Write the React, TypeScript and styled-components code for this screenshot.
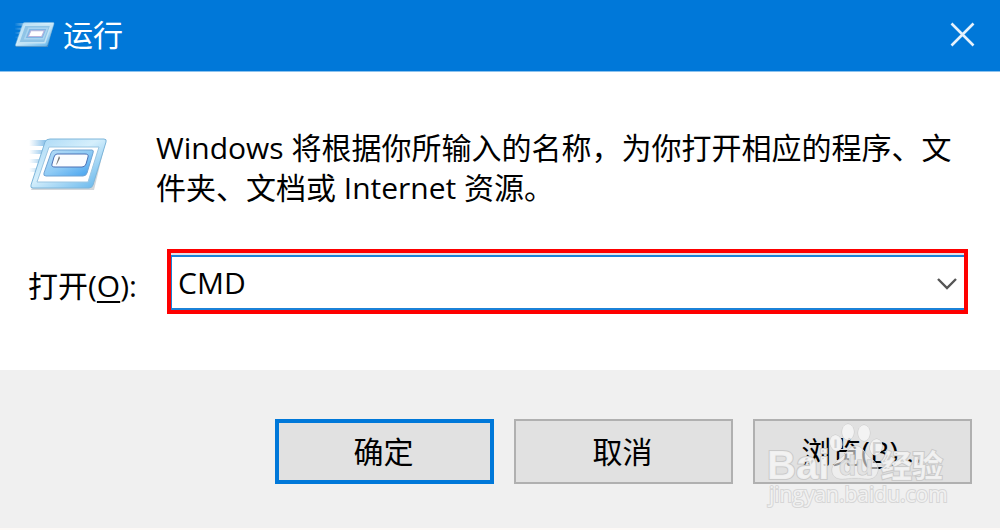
import React from "react";
import styled, { createGlobalStyle } from "styled-components";

const Global = createGlobalStyle`
  * { box-sizing: border-box; }
  body { margin: 0; background: #fdf9f6; }
  body, button, input { font-family: "Open Sans", "Noto Sans CJK SC", sans-serif; font-size: 30px; color: #000; }
`;

const Dialog = styled.main`
  position: relative;
  line-height: 40px;
`;

const TitleBar = styled.header`
  display: flex;
  align-items: center;
  height: 72px;
  padding: 0 24px 2px 14px;
  gap: 8px;
  background: #0078d9;
  border-bottom: 1px solid #8cc2ee;
  color: #fff;
`;

const Title = styled.h1`
  flex: 1;
  margin: 0;
  font-size: 30px;
  font-weight: 400;
`;

const IconButton = styled.button`
  display: flex;
  padding: 0;
  border: 0;
  background: none;
`;

const Body = styled.section`
  display: flex;
  flex-direction: column;
  gap: 41px;
  padding: 56px 32px 56px 28px;
  background: #fff;
`;

const Message = styled.div`
  display: flex;
  gap: 48px;
`;

const MessageIcon = styled.div`
  flex: none;
  padding-top: 8px;
`;

const MessageText = styled.p`
  flex: 1;
  margin: 0;
`;

const Field = styled.div`
  display: flex;
  align-items: center;
`;

const Label = styled.label`
  flex: none;
  width: 139px;
  padding-top: 8px;
`;

const Key = styled.span`
  text-decoration: underline;
  text-decoration-thickness: 2px;
  text-underline-offset: 4px;
`;

const Highlight = styled.div`
  flex: 1;
  padding-top: 2px;
  border: 4px solid #fe0000;
  background: #e3e3e8;
`;

const Combo = styled.div`
  display: flex;
  align-items: center;
  height: 55px;
  padding-right: 6px;
  border: 2px solid #1b82d8;
  border-width: 2px 0 2px 1px;
  background: #fff;
`;

const TextInput = styled.input`
  flex: 1;
  min-width: 0;
  height: 40px;
  padding: 0 6px;
  border: 0;
  outline: 0;
  background: none;
`;

const Footer = styled.footer`
  display: flex;
  justify-content: flex-end;
  gap: 20px;
  padding: 49px 28px 44px;
  background: #f0f0f0;
`;

const PushButton = styled.button<{ $primary?: boolean }>`
  width: 219px;
  height: 65px;
  padding: 0 2px 4px 0;
  border: ${(p) => (p.$primary ? "4px solid #0078d9" : "2px solid #b0b0b0")};
  background: #e1e1e1;
`;

const Watermark = styled.div`
  position: absolute;
  right: 50px;
  bottom: 16px;
  pointer-events: none;
  svg { display: block; }
`;

function RunIcon({ width, height, id, soft }: { width: number; height: number; id: string; soft?: boolean }) {
  return (
    <svg width={width} height={height} viewBox="0 0 80 56" preserveAspectRatio="none" aria-hidden="true">
      <defs>
        <linearGradient id={id + "o"} x1="0" y1="0" x2="1" y2="1">
          <stop offset="0" stopColor="#a5d6f5" />
          <stop offset=".45" stopColor="#d5effc" />
          <stop offset="1" stopColor="#59b0ea" />
        </linearGradient>
        <linearGradient id={id + "i"} x1="0" y1="0" x2="1" y2="1">
          <stop offset="0" stopColor="#b8dcf6" />
          <stop offset=".5" stopColor="#8fcbf5" />
          <stop offset="1" stopColor="#3f9fee" />
        </linearGradient>
        <linearGradient id={id + "s"}>
          <stop offset="0" stopColor="#7dbbe8" stopOpacity="0" />
          <stop offset="1" stopColor="#6fb2e4" />
        </linearGradient>
      </defs>
      <g fill={`url(#${id}s)`}>
        <path d="M1 4h20l-3 6H1zM1 14h15l-1 4H1zM1 23h12l-1 4H1zM1 32h9l-1 4H1z" />
      </g>
      <path d="M21 4h57L66 54H3z" fill="#9aa4ad" opacity=".45" />
      <path d="M22 3h54q3 0 2 3L65 49q-1 3-4 3H5q-3 0-2-3L17 6q1-3 5-3z" fill={`url(#${id}o)`} stroke="#7eb6da" />
      {soft ? (
        <>
          <path d="M21 9h51L60 45H9z" fill="#8fc4e6" stroke="#c4e4f5" strokeWidth="3" />
          <path d="M29 15h36L57 37H21z" fill="#7fb6e4" stroke="#a9d4f0" strokeWidth="3" />
          <path d="M33 20h26L54 32H28z" fill="#fff" stroke="#b8b4dc" strokeWidth="2" />
        </>
      ) : (
        <>
          <path d="M21 11h50L60 46H9z" fill="#fff" stroke="#9bc6e2" />
          <path d="M27 14h37q2 0 1 3l-6 20q-1 3-4 3H18q-3 0-2-3l7-20q1-3 4-3z" fill={`url(#${id}i)`} stroke="#71a4d4" />
          <path d="M29 18h28q4 0 3 3l-2 7q-1 3-4 3H27q-4 0-3-3l2-7q1-3 3-3z" fill="#fafcff" stroke="#4a70b5" />
          <path d="M31 20l1 2-3 6-1 1z" fill="#777" />
        </>
      )}
    </svg>
  );
}

export default function App() {
  return (
    <>
      <Global />
      <Dialog>
        <TitleBar>
          <RunIcon width={41} height={27} id="small" soft />
          <Title>运行</Title>
          <IconButton aria-label="关闭">
            <svg width="27" height="27" viewBox="0 0 27 27" fill="none" stroke="#e6f2fc" strokeWidth="2.600">
              <path d="M2.500 2.500l22 22M24.500 2.500l-22 22" />
            </svg>
          </IconButton>
        </TitleBar>
        <Body>
          <Message>
            <MessageIcon><RunIcon width={80} height={56} id="large" /></MessageIcon>
            <MessageText>Windows 将根据你所输入的名称，为你打开相应的程序、文件夹、文档或 Internet 资源。</MessageText>
          </Message>
          <Field>
            <Label htmlFor="command">打开(<Key>O</Key>):</Label>
            <Highlight>
              <Combo>
                <TextInput id="command" type="text" defaultValue="CMD" />
                <IconButton aria-label="显示列表">
                  <svg width="22" height="14" viewBox="0 0 22 14" fill="none" stroke="#555" strokeWidth="2.400">
                    <path d="M2 3l9 9 9-9" />
                  </svg>
                </IconButton>
              </Combo>
            </Highlight>
          </Field>
        </Body>
        <Footer>
          <PushButton $primary>确定</PushButton>
          <PushButton>取消</PushButton>
          <PushButton>浏览(<Key>B</Key>)...</PushButton>
        </Footer>
        <Watermark>
          <svg width="184" height="92" viewBox="0 0 184 92" fill="#f6f6f6" fillOpacity=".85" stroke="#cacaca" strokeWidth="2" paintOrder="stroke">
            <g strokeWidth="1">
              <ellipse cx="82" cy="12" rx="6" ry="8" />
              <ellipse cx="98" cy="13" rx="6" ry="8" />
              <ellipse cx="70" cy="23" rx="6" ry="8" transform="rotate(-12 70 23)" />
              <ellipse cx="110" cy="27" rx="6" ry="8" transform="rotate(12 110 27)" />
              <path d="M90 26c-7 0-9 7-14 11-6 5-10 8-10 13 0 6 4 9 10 9 5 0 8-1 13-1s8 1 13 1c6 0 10-4 10-10 0-5-4-8-9-12-5-5-7-11-13-11z" fillOpacity=".6" />
            </g>
            <g fontFamily="Liberation Sans, sans-serif" fontWeight="700">
              <text x="1" y="59" fontSize="40">Bai</text>
              <text x="73" y="55" fontSize="28" fill="#e1e1e1" stroke="#c4c4c4" strokeWidth="1">du</text>
            </g>
            <text x="115" y="57" fontFamily="Noto Sans CJK SC, sans-serif" fontWeight="700" fontSize="31">经验</text>
            <text x="3" y="82" fontFamily="Open Sans, sans-serif" fontSize="21" stroke="#d6d6d6">jingyan.baidu.com</text>
          </svg>
        </Watermark>
      </Dialog>
    </>
  );
}
